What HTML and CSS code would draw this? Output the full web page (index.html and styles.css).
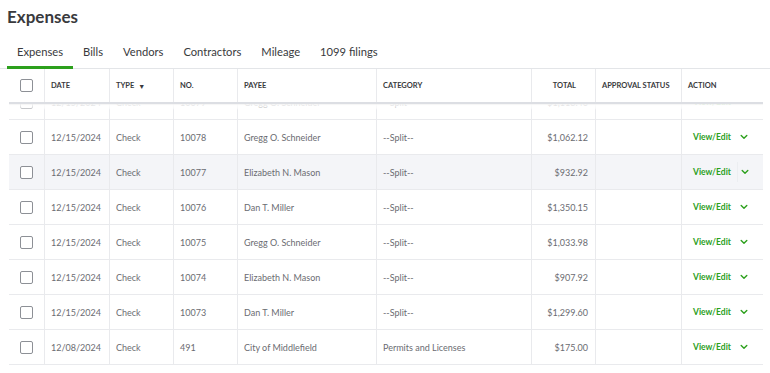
FILE: index.html
```
<!DOCTYPE html>
<html lang="en">
<head>
    <meta charset="UTF-8">
    <title>Expenses</title>
    <link rel="stylesheet" href="styles.css">
</head>
<body>

<h1 class="page-title">Expenses</h1>

<!-- Pestañas -->
<div class="tabs">
    <div class="tab active">Expenses</div>
    <div class="tab">Bills</div>
    <div class="tab">Vendors</div>
    <div class="tab">Contractors</div>
    <div class="tab">Mileage</div>
    <div class="tab">1099 filings</div>
</div>

<div class="grid">
    <div class="row head">
        <div class="cell chk"><span class="box"></span></div>
        <div class="cell">Date</div>
        <div class="cell">Type <span class="caret">&#9660;</span></div>
        <div class="cell">No.</div>
        <div class="cell">Payee</div>
        <div class="cell">Category</div>
        <div class="cell num head-total">Total</div>
        <div class="cell">Approval status</div>
        <div class="cell">Action</div>
    </div>

    <!-- Lista con scroll -->
    <div class="scroll">
        <div class="rows">
            <div class="row">
                <div class="cell chk"><span class="box"></span></div>
                <div class="cell">12/15/2024</div>
                <div class="cell">Check</div>
                <div class="cell">10079</div>
                <div class="cell">Gregg O. Schneider</div>
                <div class="cell">--Split--</div>
                <div class="cell num">$1,118.40</div>
                <div class="cell"></div>
                <div class="cell act"><span class="link">View/Edit</span><span class="more"><svg width="8" height="6" viewBox="0 0 8 6"><path d="M1.2 1.6 L4 4.3 L6.8 1.6" fill="none" stroke="#2ca01c" stroke-width="1.4" stroke-linecap="round" stroke-linejoin="round"/></svg></span></div>
            </div>
            <div class="row">
                <div class="cell chk"><span class="box"></span></div>
                <div class="cell">12/15/2024</div>
                <div class="cell">Check</div>
                <div class="cell">10078</div>
                <div class="cell">Gregg O. Schneider</div>
                <div class="cell">--Split--</div>
                <div class="cell num">$1,062.12</div>
                <div class="cell"></div>
                <div class="cell act"><span class="link">View/Edit</span><span class="more"><svg width="8" height="6" viewBox="0 0 8 6"><path d="M1.2 1.6 L4 4.3 L6.8 1.6" fill="none" stroke="#2ca01c" stroke-width="1.4" stroke-linecap="round" stroke-linejoin="round"/></svg></span></div>
            </div>
            <div class="row hover">
                <div class="cell chk"><span class="box"></span></div>
                <div class="cell">12/15/2024</div>
                <div class="cell">Check</div>
                <div class="cell">10077</div>
                <div class="cell">Elizabeth N. Mason</div>
                <div class="cell">--Split--</div>
                <div class="cell num">$932.92</div>
                <div class="cell"></div>
                <div class="cell act"><span class="link">View/Edit</span><span class="more sep"><svg width="8" height="6" viewBox="0 0 8 6"><path d="M1.2 1.6 L4 4.3 L6.8 1.6" fill="none" stroke="#2ca01c" stroke-width="1.4" stroke-linecap="round" stroke-linejoin="round"/></svg></span></div>
            </div>
            <div class="row">
                <div class="cell chk"><span class="box"></span></div>
                <div class="cell">12/15/2024</div>
                <div class="cell">Check</div>
                <div class="cell">10076</div>
                <div class="cell">Dan T. Miller</div>
                <div class="cell">--Split--</div>
                <div class="cell num">$1,350.15</div>
                <div class="cell"></div>
                <div class="cell act"><span class="link">View/Edit</span><span class="more"><svg width="8" height="6" viewBox="0 0 8 6"><path d="M1.2 1.6 L4 4.3 L6.8 1.6" fill="none" stroke="#2ca01c" stroke-width="1.4" stroke-linecap="round" stroke-linejoin="round"/></svg></span></div>
            </div>
            <div class="row">
                <div class="cell chk"><span class="box"></span></div>
                <div class="cell">12/15/2024</div>
                <div class="cell">Check</div>
                <div class="cell">10075</div>
                <div class="cell">Gregg O. Schneider</div>
                <div class="cell">--Split--</div>
                <div class="cell num">$1,033.98</div>
                <div class="cell"></div>
                <div class="cell act"><span class="link">View/Edit</span><span class="more"><svg width="8" height="6" viewBox="0 0 8 6"><path d="M1.2 1.6 L4 4.3 L6.8 1.6" fill="none" stroke="#2ca01c" stroke-width="1.4" stroke-linecap="round" stroke-linejoin="round"/></svg></span></div>
            </div>
            <div class="row">
                <div class="cell chk"><span class="box"></span></div>
                <div class="cell">12/15/2024</div>
                <div class="cell">Check</div>
                <div class="cell">10074</div>
                <div class="cell">Elizabeth N. Mason</div>
                <div class="cell">--Split--</div>
                <div class="cell num">$907.92</div>
                <div class="cell"></div>
                <div class="cell act"><span class="link">View/Edit</span><span class="more"><svg width="8" height="6" viewBox="0 0 8 6"><path d="M1.2 1.6 L4 4.3 L6.8 1.6" fill="none" stroke="#2ca01c" stroke-width="1.4" stroke-linecap="round" stroke-linejoin="round"/></svg></span></div>
            </div>
            <div class="row">
                <div class="cell chk"><span class="box"></span></div>
                <div class="cell">12/15/2024</div>
                <div class="cell">Check</div>
                <div class="cell">10073</div>
                <div class="cell">Dan T. Miller</div>
                <div class="cell">--Split--</div>
                <div class="cell num">$1,299.60</div>
                <div class="cell"></div>
                <div class="cell act"><span class="link">View/Edit</span><span class="more"><svg width="8" height="6" viewBox="0 0 8 6"><path d="M1.2 1.6 L4 4.3 L6.8 1.6" fill="none" stroke="#2ca01c" stroke-width="1.4" stroke-linecap="round" stroke-linejoin="round"/></svg></span></div>
            </div>
            <div class="row">
                <div class="cell chk"><span class="box"></span></div>
                <div class="cell">12/08/2024</div>
                <div class="cell">Check</div>
                <div class="cell">491</div>
                <div class="cell">City of Middlefield</div>
                <div class="cell">Permits and Licenses</div>
                <div class="cell num">$175.00</div>
                <div class="cell"></div>
                <div class="cell act"><span class="link">View/Edit</span><span class="more"><svg width="8" height="6" viewBox="0 0 8 6"><path d="M1.2 1.6 L4 4.3 L6.8 1.6" fill="none" stroke="#2ca01c" stroke-width="1.4" stroke-linecap="round" stroke-linejoin="round"/></svg></span></div>
            </div>
        </div>
    </div>
</div>

</body>
</html>
```

FILE: styles.css
```
/* Estilo global */
body {
    margin: 0;
    font-family: 'Lato', 'Noto Sans', sans-serif;
    color: #393a3d;
    background: #ffffff;
    overflow: hidden;
}

/* Título */
.page-title {
    margin: 0;
    padding: 6px 0 0 7px;
    height: 32px;
    font-size: 17px;
    font-weight: 700;
    color: #393a3d;
}

/* Pestañas */
.tabs {
    display: flex;
    padding-left: 7px;
    margin-top: 1px;
    border-bottom: 1px solid #e3e5e8;
}

.tab {
    padding: 6px 10px 7px;
    font-size: 11.2px;
    line-height: 14px;
    border-bottom: 3px solid transparent;
    margin-bottom: -1px;
}

.tab.active {
    border-bottom-color: #2ca01c;
}

/* Tabla */
.grid {
    margin: 0 7px 0 9px;
    font-size: 9px;
}

.row {
    display: grid;
    grid-template-columns: 36px 65px 64px 64px 139px 155px 64px 86px 81px;
    height: 35px;
    border-bottom: 1px solid #e9eaed;
    box-sizing: border-box;
}

.row.hover {
    background: #f4f5f8;
}

.cell {
    display: flex;
    align-items: center;
    padding: 0 6px;
    border-right: 1px solid #e9eaed;
    color: #6b6c72;
    white-space: nowrap;
}

.cell:last-child {
    border-right: none;
}

.head {
    height: 35px;
    border-bottom: 2px solid #dcdee3;
}

.head .cell {
    font-size: 7.5px;
    font-weight: 700;
    text-transform: uppercase;
    color: #393a3d;
}

.caret {
    font-size: 7px;
    margin-left: 4px;
}

.num {
    justify-content: flex-end;
    padding-right: 7px;
}

.head .head-total {
    padding-right: 19px;
}

/* Casilla */
.chk {
    justify-content: center;
    padding: 0;
}

.box {
    width: 11px;
    height: 11px;
    border: 1px solid #8d9096;
    border-radius: 2px;
    background: #fff;
}

/* Zona con scroll */
.scroll {
    position: relative;
    height: 262px;
    overflow: hidden;
}

/* Sombra de la cabecera fija sobre las filas */
.scroll::before {
    content: "";
    position: absolute;
    top: 0;
    left: 0;
    right: 0;
    height: 6px;
    z-index: 1;
    background: linear-gradient(rgba(255, 255, 255, 0.97), rgba(255, 255, 255, 0.6) 70%, rgba(255, 255, 255, 0));
    box-shadow: inset 0 1px 1px rgba(0, 0, 0, 0.04);
}

.rows {
    margin-top: -19px;
}

/* Acción */
.act {
    padding-left: 11px;
}

.link {
    color: #2ca01c;
    font-weight: 700;
    font-size: 8.5px;
}

.more {
    display: flex;
    align-items: center;
    margin-left: 6px;
    padding-left: 3px;
    height: 20px;
}

.more.sep {
    border-left: 1px solid #eceef1;
}
```
